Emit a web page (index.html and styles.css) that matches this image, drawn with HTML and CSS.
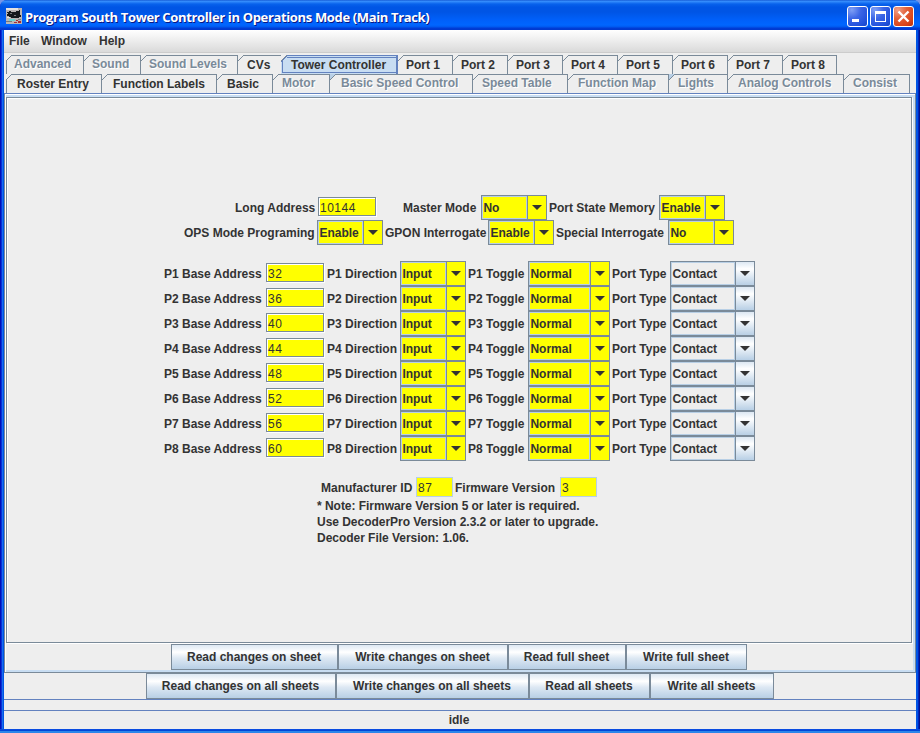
FILE: index.html
```
<!DOCTYPE html>
<html lang="en">
<head>
<meta charset="utf-8">
<title>Program South Tower Controller in Operations Mode (Main Track)</title>
<link rel="stylesheet" href="styles.css">
</head>
<body>
<div class="window">
  <header class="titlebar">
    <svg class="app-icon" width="16" height="16" viewBox="0 0 16 16" shape-rendering="crispEdges">
      <path fill="#b9b5b5" d="M0 0h16v16H0z"/>
      <path fill="#e6e2e0" d="M0 0h12v2H0zM1 9h3v1H1z"/>
      <path fill="#15181c" d="M1 4h2V3h2v1h5V3h3V2h1v5h1v2h-2v1H5V9H3V8H1V6h1V5H1z"/>
      <path fill="#76797c" d="M4 5h2v1H4zM8 7h2v1H8zM12 11h3v1h-3zM0 13h6v1H0z"/>
      <path fill="#6ed3cf" d="M3 11h6v2H3z"/>
      <path fill="#a52d35" d="M10 12h2v1h-2zM8 14h3v1H8zM12 13h3v2h-3z"/>
    </svg>
    <h1 class="title">Program South Tower Controller in Operations Mode (Main Track)</h1>
    <div class="controls">
      <span class="ctl"><svg width="21" height="21"><path fill="#fff" d="M5 13h7v3H5z"/></svg></span>
      <span class="ctl"><svg width="21" height="21"><path fill="#fff" fill-rule="evenodd" d="M5 5h11v11H5zM6 8v7h9V8z"/></svg></span>
      <span class="ctl close"><svg width="21" height="21"><path stroke="#fff" stroke-width="2.4" d="M5.5 5.500l10 10M15.500 5.500l-10 10"/></svg></span>
    </div>
  </header>
  <nav class="menubar"><span class="m-file">File</span><span class="m-window">Window</span><span>Help</span></nav>
  <div class="tabs upper">
    <div class="tab first off w78">Advanced</div><div class="tab off w57">Sound</div><div class="tab off w97">Sound Levels</div><div class="tab w44 cvs">CVs</div><div class="tab selected">Tower Controller</div><div class="tab port">Port 1</div><div class="tab port">Port 2</div><div class="tab port">Port 3</div><div class="tab port">Port 4</div><div class="tab port">Port 5</div><div class="tab port">Port 6</div><div class="tab port">Port 7</div><div class="tab port last">Port 8</div>
  </div>
  <div class="tabs lower">
    <div class="tab first w96">Roster Entry</div><div class="tab w115">Function Labels</div><div class="tab w56">Basic</div><div class="tab off w57b">Motor</div><div class="tab off w143 tint">Basic Speed Control</div><div class="tab off w95">Speed Table</div><div class="tab off w101">Function Map</div><div class="tab off w59 tint">Lights</div><div class="tab off w116">Analog Controls</div><div class="tab off w66">Consist</div>
  </div>
  <section class="pane">
    <div class="sheet">
      <div class="row r1"><label class="l83">Long Address</label><span class="field">10144</span><label class="l78 gap27">Master Mode</label><span class="combo"><b>No</b><i></i></span><label class="l110 gap2">Port State Memory</label><span class="combo"><b>Enable</b><i></i></span></div>
      <div class="row r2"><label class="l133">OPS Mode Programing</label><span class="combo"><b>Enable</b><i></i></span><label class="l103 gap2">GPON Interrogate</label><span class="combo"><b>Enable</b><i></i></span><label class="l112 gap2">Special Interrogate</label><span class="combo"><b>No</b><i></i></span></div>
      <div class="ports">
        <div class="row"><label class="l102">P1 Base Address</label><span class="field">32</span><label class="l73">P1 Direction</label><span class="combo"><b>Input</b><i></i></span><label class="l60 gap2">P1 Toggle</label><span class="combo toggle"><b>Normal</b><i></i></span><label class="l58 gap2">Port Type</label><span class="combo type"><b>Contact</b><i></i></span></div>
        <div class="row"><label class="l102">P2 Base Address</label><span class="field">36</span><label class="l73">P2 Direction</label><span class="combo"><b>Input</b><i></i></span><label class="l60 gap2">P2 Toggle</label><span class="combo toggle"><b>Normal</b><i></i></span><label class="l58 gap2">Port Type</label><span class="combo type"><b>Contact</b><i></i></span></div>
        <div class="row"><label class="l102">P3 Base Address</label><span class="field">40</span><label class="l73">P3 Direction</label><span class="combo"><b>Input</b><i></i></span><label class="l60 gap2">P3 Toggle</label><span class="combo toggle"><b>Normal</b><i></i></span><label class="l58 gap2">Port Type</label><span class="combo type"><b>Contact</b><i></i></span></div>
        <div class="row"><label class="l102">P4 Base Address</label><span class="field">44</span><label class="l73">P4 Direction</label><span class="combo"><b>Input</b><i></i></span><label class="l60 gap2">P4 Toggle</label><span class="combo toggle"><b>Normal</b><i></i></span><label class="l58 gap2">Port Type</label><span class="combo type"><b>Contact</b><i></i></span></div>
        <div class="row"><label class="l102">P5 Base Address</label><span class="field">48</span><label class="l73">P5 Direction</label><span class="combo"><b>Input</b><i></i></span><label class="l60 gap2">P5 Toggle</label><span class="combo toggle"><b>Normal</b><i></i></span><label class="l58 gap2">Port Type</label><span class="combo type"><b>Contact</b><i></i></span></div>
        <div class="row"><label class="l102">P6 Base Address</label><span class="field">52</span><label class="l73">P6 Direction</label><span class="combo"><b>Input</b><i></i></span><label class="l60 gap2">P6 Toggle</label><span class="combo toggle"><b>Normal</b><i></i></span><label class="l58 gap2">Port Type</label><span class="combo type"><b>Contact</b><i></i></span></div>
        <div class="row"><label class="l102">P7 Base Address</label><span class="field">56</span><label class="l73">P7 Direction</label><span class="combo"><b>Input</b><i></i></span><label class="l60 gap2">P7 Toggle</label><span class="combo toggle"><b>Normal</b><i></i></span><label class="l58 gap2">Port Type</label><span class="combo type"><b>Contact</b><i></i></span></div>
        <div class="row"><label class="l102">P8 Base Address</label><span class="field">60</span><label class="l73">P8 Direction</label><span class="combo"><b>Input</b><i></i></span><label class="l60 gap2">P8 Toggle</label><span class="combo toggle"><b>Normal</b><i></i></span><label class="l58 gap2">Port Type</label><span class="combo type"><b>Contact</b><i></i></span></div>
      </div>
      <div class="ids"><label class="l95">Manufacturer ID</label><span class="ro">87</span><label class="l105">Firmware Version</label><span class="ro">3</span></div>
      <div class="notes"><p>* Note: Firmware Version 5 or later is required.</p><p>Use DecoderPro Version 2.3.2 or later to upgrade.</p><p>Decoder File Version: 1.06.</p></div>
    </div>
    <div class="buttons sheet-buttons"><button class="b167">Read changes on sheet</button><button class="b170">Write changes on sheet</button><button class="b118">Read full sheet</button><button class="b121">Write full sheet</button></div>
  </section>
  <div class="buttons all-buttons"><button class="b190">Read changes on all sheets</button><button class="b193">Write changes on all sheets</button><button class="b121">Read all sheets</button><button class="b124">Write all sheets</button></div>
  <div class="strip"></div>
  <footer class="status">idle</footer>
</div>
</body>
</html>
```
FILE: styles.css
```
* { box-sizing: border-box; }
body {
  margin: 0;
  width: 920px;
  height: 733px;
  overflow: hidden;
  background: #7696e8;
  font: bold 12px/14px "Liberation Sans", Arial, sans-serif;
  color: #333;
}
.window {
  display: flex;
  flex-direction: column;
  height: 733px;
  padding: 0 4px 4px;
  border-radius: 7px 7px 0 0;
  background:
    linear-gradient(#0a4ce0 0 1px, #0046d8 1px 2px, #2c86ea 2px 4px) bottom / 100% 4px no-repeat,
    linear-gradient(90deg, #0010b8 0 1px, #0a30d8 1px 2px, #166eee 2px 3px, #0054e3 3px 4px, transparent 4px calc(100% - 4px), #0054e3 calc(100% - 4px) calc(100% - 2px), #0024c0 calc(100% - 2px) calc(100% - 1px), #00138c calc(100% - 1px)),
    #0054e3;
}
.titlebar {
  display: flex;
  flex: none;
  height: 30px;
  margin: 0 -4px;
  padding: 0 6px 0 6px;
  border-radius: 7px 7px 0 0;
  background: linear-gradient(#0848c8 0, #3b93ff 1px, #2a82f8 2px, #0862ec 4px, #0055e5 7px, #0055e5 12px, #0060fa 20px, #0066ff 25px, #0058ee 27px, #003dd7 28px, #0038cc 30px);
}
.app-icon { margin-top: 8px; }
.title {
  flex: 1;
  margin: 8px 0 0 3px;
  font: bold 13px/18px "Open Sans", sans-serif;
  letter-spacing: -0.35px;
  color: #fff;
  text-shadow: 1px 1px 0 #0a1883;
  white-space: nowrap;
}
.controls { display: flex; gap: 2px; margin-top: 6px; }
.ctl {
  width: 21px;
  height: 21px;
  border: 1px solid #fff;
  border-radius: 3px;
  background: radial-gradient(circle at 20% 15%, #7f9ff5, #3c66e6 40%, #2352dc 75%, #1444c8);
}
.ctl svg { display: block; margin: -1px; }
.close { background: radial-gradient(circle at 20% 15%, #f0a088, #e26038 40%, #d9441a 75%, #b83010); }
.menubar {
  display: flex;
  flex: none;
  height: 23px;
  padding: 4px 0 0 5px;
  background: linear-gradient(#fff, #dadada);
  border-bottom: 1px solid #ccc;
}
.m-file { width: 32px; }
.m-window { width: 58px; }
.tabs { display: flex; flex: none; background: #eee; }
.upper { height: 21px; padding: 2px 0 0 2px; }
.lower { height: 19px; padding-left: 2px; }
.tab {
  position: relative;
  height: 19px;
  padding: 3px 0 0 10px;
  border-right: 1px solid #7a8a99;
  background: linear-gradient(#7a8a99, #7a8a99) 6px 0 / 100% 1px no-repeat;
  white-space: nowrap;
}
.tab::before {
  content: "";
  position: absolute;
  left: 0;
  top: 0;
  width: 6px;
  height: 6px;
  background: linear-gradient(135deg, transparent calc(50% - .6px), #7a8a99 calc(50% - .5px), #7a8a99 calc(50% + .5px), transparent calc(50% + .6px));
}
.tint::before { background: linear-gradient(135deg, #b8cfe5 calc(50% - .6px), #7a8a99 calc(50% - .5px), #7a8a99 calc(50% + .5px), transparent calc(50% + .6px)); }
.first { background: linear-gradient(#7a8a99, #7a8a99) 6px 0 / 100% 1px no-repeat, linear-gradient(#7a8a99, #7a8a99) 0 6px / 1px 100% no-repeat; }
.off { padding-top: 2px; color: #7a8a99; text-shadow: 1px 1px 0 #fff; }
.upper .off { padding-left: 8px; }
.upper .port { width: 55px; padding-left: 8px; }
.upper .last { width: 54px; }
.upper .cvs { padding-left: 9px; }
.selected {
  width: 117px;
  margin-left: -1px;
  padding-left: 10px;
  border-right: 2px solid #6382bf;
  background: linear-gradient(#6382bf, #6382bf) 6px 0 / 100% 1px no-repeat,
    linear-gradient(#6382bf, #6382bf) 6px 2px / 100% 1px no-repeat,
    linear-gradient(#6382bf, #6382bf) 1px 17px / 100% 1px no-repeat,
    linear-gradient(#6382bf, #6382bf) 1px 5px / 1px 13px no-repeat,
    linear-gradient(135deg, #eee 4px, #6382bf 4px 5px, #c8ddf2 5px);
}
.w78 { width: 78px; }
.w57 { width: 57px; }
.w97 { width: 97px; }
.w44 { width: 44px; }
.w96 { width: 96px; padding-left: 11px; }
.w115 { width: 115px; padding-left: 11px; }
.w56 { width: 56px; }
.w57b { width: 57px; padding-left: 9px; }
.w143 { width: 143px; padding-left: 11px; }
.w95 { width: 95px; padding-left: 9px; }
.w101 { width: 101px; padding-left: 10px; }
.w59 { width: 59px; padding-left: 9px; }
.w116 { width: 116px; padding-left: 10px; }
.w66 { width: 66px; padding-left: 9px; }
.pane {
  flex: none;
  height: 580px;
  background: #eee;
  border: 1px solid #7a8a99;
  border-top-color: #6382bf;
  box-shadow: inset 1px 1px 0 #fff, inset 1px 0 0 #c8ddf2, inset -2px -2px 0 #c8ddf2, inset 0 3px 0 #c8ddf2;
  padding: 3px 3px 0 1px;
}
.sheet {
  height: 546px;
  border: 1px solid #7a8a99;
  box-shadow: 1px 1px 0 #fff, inset 1px 1px 0 #fff;
  padding: 97px 0 0;
}
.row { display: flex; height: 25px; padding-left: 157px; }
.r1 { padding-left: 228px; }
.r2 { padding-left: 177px; }
.row label { flex: none; padding-top: 6px; white-space: nowrap; }
.ports { margin-top: 16px; }
.row .gap2 { margin-left: 2px; }
.row .gap27 { margin-left: 27px; }
.l83 { width: 83px; }
.l78 { width: 78px; }
.l110 { width: 110px; }
.l133 { width: 133px; }
.l103 { width: 103px; }
.l112 { width: 112px; }
.l102 { width: 102px; }
.row .l73 { width: 73px; margin-left: 3px; }
.l60 { width: 60px; }
.l58 { width: 58px; }
.field {
  width: 58px;
  height: 19px;
  margin-top: 2px;
  padding: 3px 0 0 1px;
  border: 1px solid #7a8a99;
  background: #ff0;
  box-shadow: 1px 1px 0 #fff, inset 1px 1px 0 #fff;
  font-weight: normal;
  letter-spacing: .5px;
}
.combo {
  display: flex;
  width: 66px;
  height: 25px;
  border: 1px solid #7a8a99;
  background: #ff0;
}
.combo b {
  flex: 1;
  padding: 4px 0 0 .4px;
  border: 1px solid #b8cfe5;
}
.combo i {
  display: flex;
  align-items: center;
  justify-content: center;
  width: 19px;
  border-left: 1px solid #7a8a99;
}
.combo i::before {
  content: "";
  border: 5px solid transparent;
  border-top-color: #333;
  border-bottom: 0;
}
.toggle { width: 82px; }
.type { width: 85px; background: #eee; }
.type i { background: linear-gradient(#dde8f3, #fff 30%, #b8cfe5); }
.ids { display: flex; height: 20px; margin-top: 16px; padding-left: 314px; }
.ids label { padding-top: 4px; }
.l95 { width: 95px; }
.ids .l105 { width: 105px; margin-left: 2px; }
.ro {
  width: 37px;
  height: 20px;
  padding: 4px 0 0 1px;
  border: 1px solid #b8cfe5;
  background: #ff0;
  font-weight: normal;
  line-height: 13px;
  letter-spacing: .5px;
}
.notes { padding: 1px 0 0 310px; letter-spacing: -.03px; }
.notes p { margin: 0; line-height: 16px; }
.buttons { display: flex; flex: none; }
.sheet-buttons { margin-top: 1px; padding-left: 165px; }
.all-buttons { height: 26px; padding-left: 142px; background: #eee; }
button {
  height: 26px;
  padding: 0 1px 0 0;
  border: 1px solid #7a8a99;
  border-radius: 0;
  background: linear-gradient(#dde8f3, #fff 30%, #dde8f3 55%, #b8cfe5);
  font: inherit;
  color: #333;
}
.b167 { width: 167px; }
.b170 { width: 170px; }
.b118 { width: 118px; }
.b121 { width: 121px; }
.b190 { width: 190px; }
.b193 { width: 193px; }
.b124 { width: 124px; }
.strip { flex: none; height: 12px; background: #eee; border: solid #6382bf; border-width: 1px 0; }
.status { flex: 1; padding-top: 2px; background: #eee; text-align: center; padding-right: 2px; }
```
